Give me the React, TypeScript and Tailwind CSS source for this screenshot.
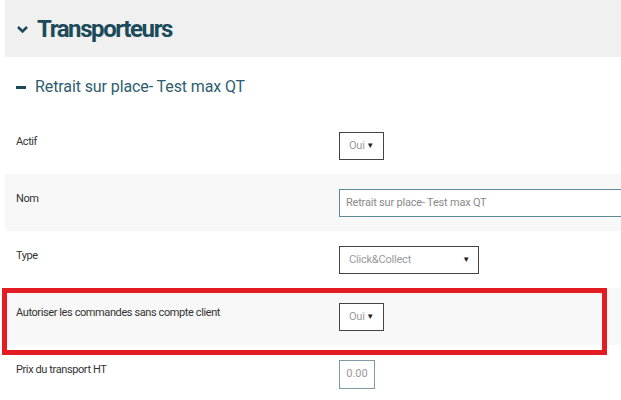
import React from "react";

const rows = [
  { label: "Actif", kind: "select-sm", value: "Oui" },
  { label: "Nom", kind: "text", value: "Retrait sur place- Test max QT" },
  { label: "Type", kind: "select-lg", value: "Click&Collect" },
  { label: "Autoriser les commandes sans compte client", kind: "select-sm", value: "Oui", flagged: true },
  { label: "Prix du transport HT", kind: "price", value: "0.00" },
];

function Caret() {
  return <span className="text-[8px] leading-none text-[#222]">▼</span>;
}

function Control({ kind, value }: { kind: string; value: string }) {
  if (kind === "select-sm") {
    return (
      <div className="flex h-[28px] w-[45px] items-center justify-between border border-[#444] bg-white pl-[9px] pr-[9px] text-[11px] tracking-[-0.2px] text-[#9a9a9a]">
        <span>{value}</span>
        <Caret />
      </div>
    );
  }
  if (kind === "select-lg") {
    return (
      <div className="flex h-[28px] w-[140px] items-center justify-between border border-[#444] bg-white pl-[9px] pr-[8px] text-[11px] tracking-[-0.2px] text-[#9a9a9a]">
        <span>{value}</span>
        <Caret />
      </div>
    );
  }
  if (kind === "text") {
    return (
      <div className="flex h-[28px] w-[300px] items-center border border-[#5f8b96] bg-white pl-[6px] text-[11px] tracking-[-0.2px] text-[#8a8a8a]">
        {value}
      </div>
    );
  }
  return (
    <div className="flex h-[29px] w-[36px] items-center justify-center border border-[#7f9aa3] bg-white text-[11px] text-[#9a9a9a]">
      {value}
    </div>
  );
}

export default function App() {
  return (
    <div
      className="h-[400px] w-[621px] overflow-hidden bg-white pl-[5px]"
      style={{ fontFamily: "Roboto, 'Liberation Sans', sans-serif" }}
    >
      <div className="flex h-[57px] items-center gap-[8px] bg-[#f0f0f0] pl-[11px]">
        <svg width="13" height="9" viewBox="0 0 13 9" className="mt-[1px]">
          <path d="M2 2 L6.5 6.5 L11 2" fill="none" stroke="#1b4a5a" strokeWidth="2.6" />
        </svg>
        <h1 className="text-[24px] font-bold tracking-[-1.4px] text-[#1b4a5a]">Transporteurs</h1>
      </div>

      <div className="flex h-[60px] items-center gap-[9px] pl-[11px]">
        <span className="h-[3px] w-[10px] bg-[#1b4a5a]" />
        <h2 className="text-[16px] tracking-[-0.1px] text-[#2e5d70]">Retrait sur place- Test max QT</h2>
      </div>

      {rows.map((row, i) => (
        <div
          key={row.label}
          className={`relative grid h-[57px] grid-cols-[334px_1fr] ${i % 2 === 1 ? "bg-[#f8f8f8]" : "bg-white"}`}
        >
          <div className="pl-[11px] pt-[17px] text-[11px] tracking-[-0.4px] text-[#333]">{row.label}</div>
          <div className="pt-[15px]">
            <Control kind={row.kind} value={row.value} />
          </div>
          {row.flagged && (
            <div className="pointer-events-none absolute left-[-3px] right-[14px] top-0 z-10 h-[67px] border-[5px] border-[#e31b23]" />
          )}
        </div>
      ))}
    </div>
  );
}
